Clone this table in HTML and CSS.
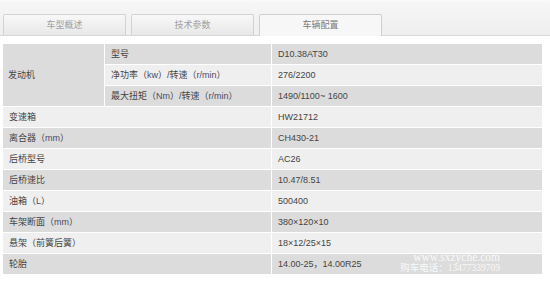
FILE: index.html
```html
<!DOCTYPE html>
<html lang="zh">
<head>
<meta charset="utf-8">
<link rel="stylesheet" href="styles.css">
</head>
<body>
<div class="page">
  <div class="tabbar">
    <div class="tab">车型概述</div>
    <div class="tab">技术参数</div>
    <div class="tab active">车辆配置</div>
  </div>
  <div class="spec-wrap">
    <table class="spec">
      <colgroup>
        <col class="c1"><col class="c2"><col class="c3">
      </colgroup>
      <tr class="dark"><td rowspan="3" class="group">发动机</td><td>型号</td><td>D10.38AT30</td></tr>
      <tr class="light"><td>净功率（<span class="en">kw</span>）/转速（<span class="en">r/min</span>）</td><td>276/2200</td></tr>
      <tr class="dark"><td>最大扭矩（<span class="en">Nm</span>）/转速（<span class="en">r/min</span>）</td><td>1490/1100~ 1600</td></tr>
      <tr class="light"><td colspan="2">变速箱</td><td>HW21712</td></tr>
      <tr class="dark"><td colspan="2">离合器（<span class="en">mm</span>）</td><td>CH430-21</td></tr>
      <tr class="light"><td colspan="2">后桥型号</td><td>AC26</td></tr>
      <tr class="dark"><td colspan="2">后桥速比</td><td>10.47/8.51</td></tr>
      <tr class="light"><td colspan="2">油箱（<span class="en">L</span>）</td><td>500400</td></tr>
      <tr class="dark"><td colspan="2">车架断面（<span class="en">mm</span>）</td><td>380×120×10</td></tr>
      <tr class="light"><td colspan="2">悬架（前簧后簧）</td><td>18×12/25×15</td></tr>
      <tr class="dark"><td colspan="2">轮胎</td><td>14.00-25，14.00R25</td></tr>
    </table>
    <div class="watermark">
      <div class="wm-url">www.sxzyche.com</div>
      <div class="wm-tel">购车电话：13477339709</div>
    </div>
  </div>
</div>
</body>
</html>
```

FILE: styles.css
```css
html, body {
  margin: 0;
  padding: 0;
  background: #ffffff;
}

.page {
  width: 550px;
  height: 282px;
  overflow: hidden;
  font-family: "Liberation Sans", "Noto Sans CJK SC", sans-serif;
  font-size: 9px;
  color: #444444;
}

.tabbar {
  height: 36px;
  box-sizing: border-box;
  padding: 15px 0 0 3px;
  display: flex;
  align-items: flex-end;
  gap: 5px;
  background: linear-gradient(#fbfbfb 0, #f6f6f6 3px, #eeeeee 100%);
  border-bottom: 1px solid #d6d6d6;
}

.tab {
  width: 121px;
  height: 20px;
  line-height: 20px;
  text-align: center;
  color: #a0a0a0;
  background: linear-gradient(#f8f8f8, #e8e8e8);
  border: 1px solid #d2d2d2;
  border-bottom: none;
  border-radius: 2px 2px 0 0;
}

.tab.active {
  background: #f7f7f7;
  color: #7a7a7a;
  border-color: #cfcfcf;
  height: 21px;
  margin-bottom: -1px;
}

.spec-wrap {
  position: relative;
  margin: 8px 0 0 3px;
  width: 539px;
}

.spec {
  width: 539px;
  border-collapse: separate;
  border-spacing: 0;
  table-layout: fixed;
}

.c1 { width: 102px; }
.c2 { width: 167px; }
.c3 { width: 270px; }

.spec td {
  height: 20px;
  padding: 0 0 0 6px;
  border-bottom: 1px solid #ffffff;
  border-right: 1px solid #ffffff;
  white-space: nowrap;
  vertical-align: middle;
  line-height: 20px;
}

.spec td:last-child {
  border-right: none;
}

.spec td.group {
  padding-left: 5px;
  background: #dcdcdc;
}

.dark td {
  background: #dcdcdc;
}

.light td {
  background: #efefef;
}

.en {
  color: #4a4a6a;
}

.watermark {
  position: absolute;
  left: 380px;
  top: 208px;
  width: 117px;
  font-family: "Liberation Serif", "Noto Sans CJK SC", serif;
  line-height: 11px;
  color: rgba(255, 255, 255, 0.85);
  text-align: right;
  white-space: nowrap;
}

.wm-url {
  font-size: 11.5px;
}

.wm-tel {
  font-size: 9.5px;
}
```
